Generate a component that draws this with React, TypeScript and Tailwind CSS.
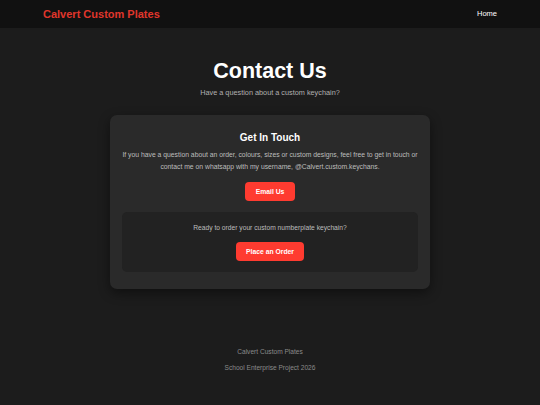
export default function App() {
  return (
    <div className="min-h-[405px] bg-[#1c1c1c] flex flex-col" style={{ fontFamily: '"Liberation Sans", Arial, sans-serif' }}>
      <nav className="h-[28px] bg-[#111111] flex items-center justify-between pl-[43px] pr-[43px]">
        <span className="text-[11px] leading-[14px] font-bold text-[#e0362c]">Calvert Custom Plates</span>
        <span className="text-[7.5px] leading-[10px] text-white">Home</span>
      </nav>
      <main className="flex flex-col items-center">
        <h1 className="mt-[32px] text-[21.5px] font-bold text-white leading-[22px]">Contact Us</h1>
        <p className="mt-[6px] text-[7.3px] leading-[9px] text-[#b0b0b0]">Have a question about a custom keychain?</p>
        <section className="mt-[18px] w-[320px] rounded-[7px] bg-[#2a2a2a] shadow-[0_4px_12px_rgba(0,0,0,0.45)] px-[12px] pt-[17px] pb-[17px] flex flex-col items-center">
          <h2 className="text-[10px] font-bold text-white leading-[12px]">Get In Touch</h2>
          <p className="mt-[5px] text-[6.8px] leading-[12px] text-[#bdbdbd] text-center">
            If you have a question about an order, colours, sizes or custom designs, feel free to get in touch or contact me on whatsapp with my username, @Calvert.custom.keychans.
          </p>
          <button className="mt-[9px] h-[19px] w-[50px] rounded-[4px] bg-[#ff3b30] text-white text-[6.8px] leading-[8px] font-bold">Email Us</button>
          <div className="mt-[11px] w-full rounded-[5px] bg-[#222222] flex flex-col items-center pt-[12px] pb-[11px]">
            <p className="text-[6.7px] leading-[8px] text-[#bdbdbd]">Ready to order your custom numberplate keychain?</p>
            <button className="mt-[10px] h-[19px] w-[68px] rounded-[4px] bg-[#ff3b30] text-white text-[6.8px] leading-[8px] font-bold">Place an Order</button>
          </div>
        </section>
      </main>
      <footer className="mt-[59px] flex flex-col items-center gap-[8px] text-[6.6px] leading-[8px] text-[#8a8a8a]">
        <span>Calvert Custom Plates</span>
        <span>School Enterprise Project 2026</span>
      </footer>
    </div>
  );
}
